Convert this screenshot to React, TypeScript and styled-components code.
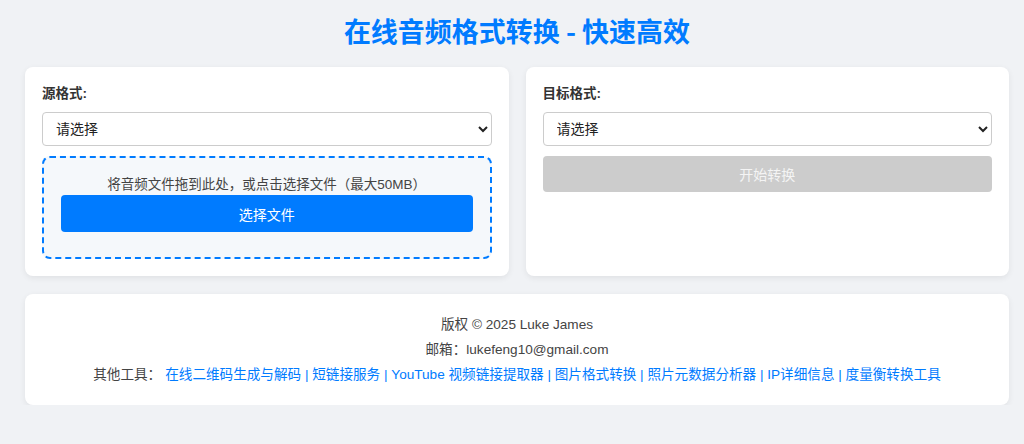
import React from 'react';
import styled, {createGlobalStyle} from "styled-components";

const GlobalStyle = createGlobalStyle`
    html, body {
        margin: 0;
        padding: 0;
        background: #f0f2f5;
        font-family: "Liberation Sans", "Noto Sans CJK SC", sans-serif;
        color: #333;
    }
`

const tools = [
    "在线二维码生成与解码",
    "短链接服务",
    "YouTube 视频链接提取器",
    "图片格式转换",
    "照片元数据分析器",
    "IP详细信息",
    "度量衡转换工具",
]

export default function App() {
    return (
        <>
            <GlobalStyle/>
            <Page>
                <Title>在线音频格式转换 - 快速高效</Title>
                <Panels>
                    <Card>
                        <Label>源格式:</Label>
                        <Select defaultValue="">
                            <option value="">请选择</option>
                        </Select>
                        <DropZone>
                            <DropText>将音频文件拖到此处，或点击选择文件（最大50MB）</DropText>
                            <Button>选择文件</Button>
                        </DropZone>
                    </Card>
                    <Card>
                        <Label>目标格式:</Label>
                        <Select defaultValue="">
                            <option value="">请选择</option>
                        </Select>
                        <Button disabled>开始转换</Button>
                    </Card>
                </Panels>
                <Footer>
                    <FooterLine>版权 © 2025 Luke James</FooterLine>
                    <FooterLine>邮箱：lukefeng10@gmail.com</FooterLine>
                    <FooterLine>
                        其他工具：
                        <Links>
                            {tools.map((t, i) => (
                                <React.Fragment key={t}>
                                    {i > 0 && " | "}
                                    <Link href="#">{t}</Link>
                                </React.Fragment>
                            ))}
                        </Links>
                    </FooterLine>
                </Footer>
            </Page>
        </>
    );
}

const Page = styled.div`
    padding: 15px 15px 0 25px;
`

const Title = styled.h1`
    margin: 0 0 20px;
    font-family: "Noto Sans CJK SC", sans-serif;
    font-size: 27px;
    line-height: 32px;
    font-weight: 700;
    text-align: center;
    color: #007bff;
`

const Panels = styled.div`
    display: grid;
    grid-template-columns: 1fr 1fr;
    gap: 17px;
    margin-bottom: 18px;
`

const Card = styled.div`
    background: #fff;
    border-radius: 8px;
    padding: 17px;
    box-shadow: 0 2px 6px rgba(0, 0, 0, 0.07);
    display: flex;
    flex-direction: column;
`

const Label = styled.label`
    font-size: 13.5px;
    font-weight: 700;
    line-height: 20px;
    color: #333;
    margin-bottom: 8px;
`

const Select = styled.select`
    height: 34px;
    padding: 0 9px;
    border: 1px solid #ccc;
    border-radius: 4px;
    background: #fff;
    font-family: "Liberation Sans", "Noto Sans CJK SC", sans-serif;
    font-size: 14px;
    color: #222;
    margin-bottom: 10px;
`

const DropZone = styled.div`
    border: 2px dashed #007bff;
    border-radius: 8px;
    background: #f5f8fb;
    padding: 17px 17px 25px;
    display: flex;
    flex-direction: column;
    align-items: stretch;
`

const DropText = styled.p`
    margin: 0;
    font-size: 13.5px;
    line-height: 20px;
    text-align: center;
    color: #444;
`

const Button = styled.button`
    height: 37px;
    border: none;
    border-radius: 4px;
    background: #007bff;
    color: #fff;
    font-family: "Liberation Sans", "Noto Sans CJK SC", sans-serif;
    font-size: 14px;

    &:disabled {
        height: 36px;
        background: #ccc;
        color: #f4f4f4;
    }
`

const Footer = styled.footer`
    background: #fff;
    border-radius: 8px;
    padding: 18px;
    box-shadow: 0 2px 6px rgba(0, 0, 0, 0.07);
    text-align: center;
`

const FooterLine = styled.p`
    margin: 0;
    font-size: 13.6px;
    line-height: 25px;
    color: #444;
`

const Links = styled.span`
    margin-left: 4px;
    color: #007bff;
`

const Link = styled.a`
    color: #007bff;
    text-decoration: none;
`
